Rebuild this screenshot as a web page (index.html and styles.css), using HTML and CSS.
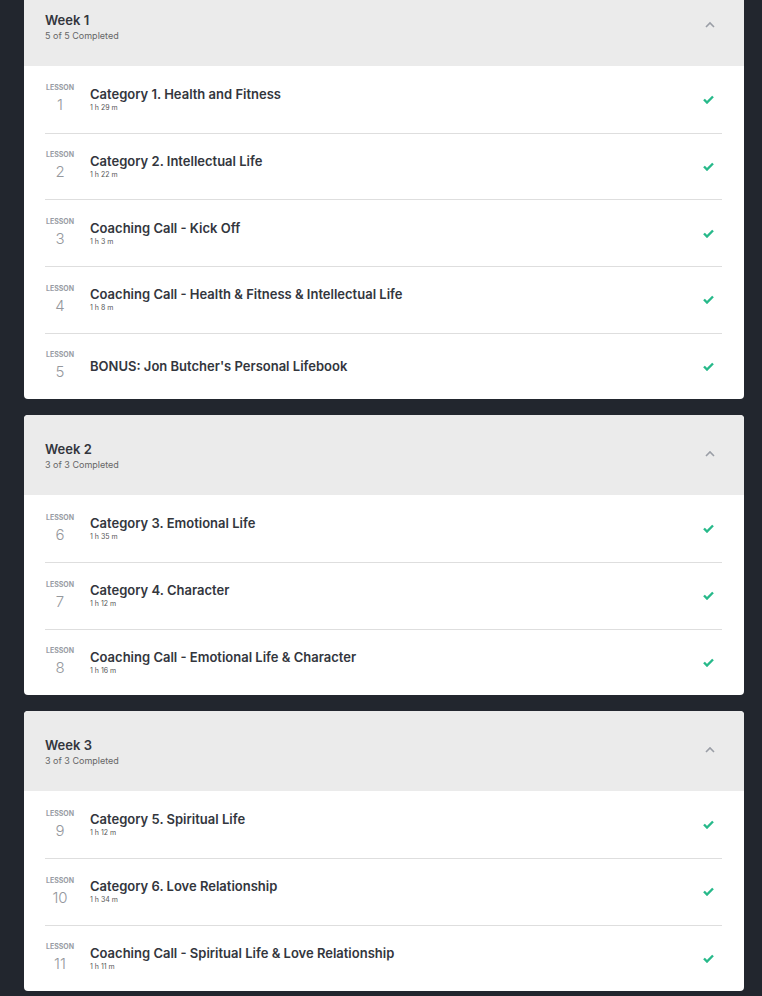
FILE: index.html
```html
<!DOCTYPE html>
<html>
<head>
<meta charset="utf-8">
<link rel="stylesheet" href="styles.css">
</head>
<body>
<div class="modules">
  <section class="card">
    <div class="card-head">
      <div class="head-text"><div class="week">Week 1</div><div class="done">5 of 5 Completed</div></div>
      <svg class="chev" width="10" height="7" viewBox="0 0 10 7"><path d="M1 6 L5 2 L9 6" fill="none" stroke="#9a9ea6" stroke-width="1.6"/></svg>
    </div>
    <div class="row"><div class="num"><span class="lbl">LESSON</span><span class="n">1</span></div><div class="info"><div class="title">Category 1. Health and Fitness</div><div class="dur">1 h 29 m</div></div><svg class="check" width="11" height="9" viewBox="0 0 11 9"><path d="M1 4.5 L4 7.5 L10 1.5" fill="none" stroke="#27b98a" stroke-width="2.4"/></svg></div>
    <div class="row"><div class="num"><span class="lbl">LESSON</span><span class="n">2</span></div><div class="info"><div class="title">Category 2. Intellectual Life</div><div class="dur">1 h 22 m</div></div><svg class="check" width="11" height="9" viewBox="0 0 11 9"><path d="M1 4.5 L4 7.5 L10 1.5" fill="none" stroke="#27b98a" stroke-width="2.4"/></svg></div>
    <div class="row"><div class="num"><span class="lbl">LESSON</span><span class="n">3</span></div><div class="info"><div class="title">Coaching Call - Kick Off</div><div class="dur">1 h 3 m</div></div><svg class="check" width="11" height="9" viewBox="0 0 11 9"><path d="M1 4.5 L4 7.5 L10 1.5" fill="none" stroke="#27b98a" stroke-width="2.4"/></svg></div>
    <div class="row"><div class="num"><span class="lbl">LESSON</span><span class="n">4</span></div><div class="info"><div class="title">Coaching Call - Health &amp; Fitness &amp; Intellectual Life</div><div class="dur">1 h 8 m</div></div><svg class="check" width="11" height="9" viewBox="0 0 11 9"><path d="M1 4.5 L4 7.5 L10 1.5" fill="none" stroke="#27b98a" stroke-width="2.4"/></svg></div>
    <div class="row"><div class="num"><span class="lbl">LESSON</span><span class="n">5</span></div><div class="info"><div class="title">BONUS: Jon Butcher's Personal Lifebook</div></div><svg class="check" width="11" height="9" viewBox="0 0 11 9"><path d="M1 4.5 L4 7.5 L10 1.5" fill="none" stroke="#27b98a" stroke-width="2.4"/></svg></div>
  </section>
  <section class="card">
    <div class="card-head">
      <div class="head-text"><div class="week">Week 2</div><div class="done">3 of 3 Completed</div></div>
      <svg class="chev" width="10" height="7" viewBox="0 0 10 7"><path d="M1 6 L5 2 L9 6" fill="none" stroke="#9a9ea6" stroke-width="1.6"/></svg>
    </div>
    <div class="row"><div class="num"><span class="lbl">LESSON</span><span class="n">6</span></div><div class="info"><div class="title">Category 3. Emotional Life</div><div class="dur">1 h 35 m</div></div><svg class="check" width="11" height="9" viewBox="0 0 11 9"><path d="M1 4.5 L4 7.5 L10 1.5" fill="none" stroke="#27b98a" stroke-width="2.4"/></svg></div>
    <div class="row"><div class="num"><span class="lbl">LESSON</span><span class="n">7</span></div><div class="info"><div class="title">Category 4. Character</div><div class="dur">1 h 12 m</div></div><svg class="check" width="11" height="9" viewBox="0 0 11 9"><path d="M1 4.5 L4 7.5 L10 1.5" fill="none" stroke="#27b98a" stroke-width="2.4"/></svg></div>
    <div class="row"><div class="num"><span class="lbl">LESSON</span><span class="n">8</span></div><div class="info"><div class="title">Coaching Call - Emotional Life &amp; Character</div><div class="dur">1 h 16 m</div></div><svg class="check" width="11" height="9" viewBox="0 0 11 9"><path d="M1 4.5 L4 7.5 L10 1.5" fill="none" stroke="#27b98a" stroke-width="2.4"/></svg></div>
  </section>
  <section class="card">
    <div class="card-head">
      <div class="head-text"><div class="week">Week 3</div><div class="done">3 of 3 Completed</div></div>
      <svg class="chev" width="10" height="7" viewBox="0 0 10 7"><path d="M1 6 L5 2 L9 6" fill="none" stroke="#9a9ea6" stroke-width="1.6"/></svg>
    </div>
    <div class="row"><div class="num"><span class="lbl">LESSON</span><span class="n">9</span></div><div class="info"><div class="title">Category 5. Spiritual Life</div><div class="dur">1 h 12 m</div></div><svg class="check" width="11" height="9" viewBox="0 0 11 9"><path d="M1 4.5 L4 7.5 L10 1.5" fill="none" stroke="#27b98a" stroke-width="2.4"/></svg></div>
    <div class="row"><div class="num"><span class="lbl">LESSON</span><span class="n">10</span></div><div class="info"><div class="title">Category 6. Love Relationship</div><div class="dur">1 h 34 m</div></div><svg class="check" width="11" height="9" viewBox="0 0 11 9"><path d="M1 4.5 L4 7.5 L10 1.5" fill="none" stroke="#27b98a" stroke-width="2.4"/></svg></div>
    <div class="row"><div class="num"><span class="lbl">LESSON</span><span class="n">11</span></div><div class="info"><div class="title">Coaching Call - Spiritual Life &amp; Love Relationship</div><div class="dur">1 h 11 m</div></div><svg class="check" width="11" height="9" viewBox="0 0 11 9"><path d="M1 4.5 L4 7.5 L10 1.5" fill="none" stroke="#27b98a" stroke-width="2.4"/></svg></div>
  </section>
</div>
</body>
</html>
```
FILE: styles.css
```css
html, body {
  margin: 0;
  padding: 0;
  background: #22262e;
  overflow: hidden;
}
body {
  font-family: "Inter", "Noto Sans", sans-serif;
  color: #33363d;
}
.modules {
  margin-top: -14px;
  padding: 0 18px 0 24px;
  display: flex;
  flex-direction: column;
  gap: 16px;
}
.card {
  background: #fff;
  border-radius: 4px;
  overflow: hidden;
}
.card-head {
  background: #ebebeb;
  height: 80px;
  box-sizing: border-box;
  padding: 2px 29px 0 21px;
  display: flex;
  align-items: center;
  justify-content: space-between;
}
.chev {
  margin-bottom: 5px;
}
.week {
  font-size: 13px;
  font-weight: 600;
  line-height: 16px;
  color: #33363d;
}
.done {
  font-size: 9px;
  line-height: 12px;
  color: #666;
  margin-top: 2px;
}
.row {
  height: 66.67px;
  box-sizing: border-box;
  margin: 0 22px 0 21px;
  display: flex;
  align-items: center;
}
.row + .row {
  border-top: 1px solid #dedede;
}
.num {
  width: 30px;
  display: flex;
  flex-direction: column;
  align-items: center;
  margin-right: 15px;
}
.lbl {
  font-size: 7px;
  font-weight: 700;
  color: #989ca4;
  line-height: 8px;
}
.n {
  font-size: 15px;
  line-height: 18px;
  color: #95989d;
  font-weight: 300;
  margin-top: 4px;
}
.info {
  flex: 1;
}
.title {
  font-size: 13px;
  font-weight: 600;
  line-height: 16px;
  color: #33363d;
}
.dur {
  font-size: 7px;
  line-height: 10px;
  color: #555;
  margin-top: 1px;
}
.check {
  margin-right: 8px;
}
```
